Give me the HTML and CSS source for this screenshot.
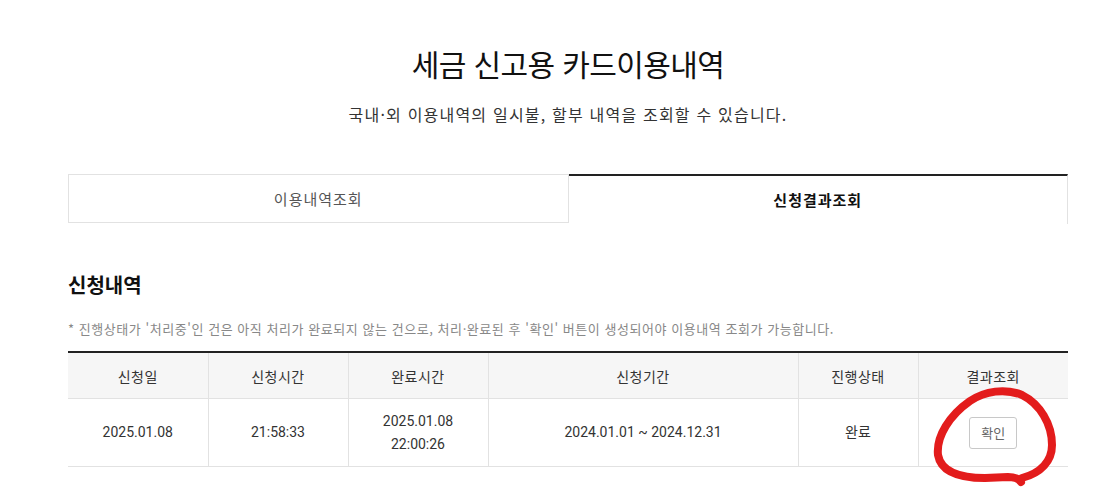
FILE: index.html
```html
<!DOCTYPE html>
<html lang="ko">
<head>
    <meta charset="UTF-8">
    <meta name="viewport" content="width=device-width, initial-scale=1.0">
    <title>세금 신고용 카드이용내역</title>
    <link rel="stylesheet" href="styles.css">
</head>
<body>
    <div class="container">
        <div class="page-head">
            <h1>세금 신고용 카드이용내역</h1>
            <p class="lead">국내·외 이용내역의 일시불, 할부 내역을 조회할 수 있습니다.</p>
        </div>

        <div class="tabs">
            <a class="tab" href="#">이용내역조회</a>
            <a class="tab active" href="#">신청결과조회</a>
        </div>

        <h2 class="section-title">신청내역</h2>
        <p class="note">* 진행상태가 '처리중'인 건은 아직 처리가 완료되지 않는 건으로, 처리·완료된 후 '확인' 버튼이 생성되어야 이용내역 조회가 가능합니다.</p>

        <table class="result-table">
            <colgroup>
                <col class="c-date">
                <col class="c-time">
                <col class="c-done">
                <col class="c-period">
                <col class="c-state">
                <col class="c-result">
            </colgroup>
            <thead>
                <tr>
                    <th>신청일</th>
                    <th>신청시간</th>
                    <th>완료시간</th>
                    <th>신청기간</th>
                    <th>진행상태</th>
                    <th>결과조회</th>
                </tr>
            </thead>
            <tbody>
                <tr>
                    <td>2025.01.08</td>
                    <td>21:58:33</td>
                    <td>2025.01.08<br>22:00:26</td>
                    <td>2024.01.01 ~ 2024.12.31</td>
                    <td>완료</td>
                    <td><button class="btn-check">확인</button></td>
                </tr>
            </tbody>
        </table>
    </div>

    <!-- hand drawn mark over the button -->
    <svg class="mark" width="1096" height="504" viewBox="0 0 1096 504">
        <path d="M1022 478 C1041 473 1052 461 1052 445 C1052 424 1040 404 1022 395 C1005 388 985 391 970 401 C950 415 936 436 938 455 C941 472 960 478 985 478 L1008 477 C1015 477 1019 479 1021 482"
              fill="none" stroke="#e31c1c" stroke-width="8" stroke-linecap="round" stroke-linejoin="round"/>
    </svg>
</body>
</html>
```

FILE: styles.css
```css
body {
    margin: 0;
    background: #fff;
    color: #222;
    font-family: "Noto Sans CJK KR", "Noto Sans", sans-serif;
}

.container {
    width: 1000px;
    margin-left: 68px;
    padding-top: 42px;
}

.page-head {
    text-align: center;
}

h1 {
    margin: 0;
    font-size: 30px;
    font-weight: 400;
    letter-spacing: -0.6px;
    line-height: 42px;
    color: #111;
}

.lead {
    margin: 18px 0 0;
    font-size: 16px;
    letter-spacing: 1.2px;
    line-height: 24px;
    color: #333;
}

.tabs {
    display: flex;
    margin-top: 48px;
}

.tab {
    flex: 1;
    height: 47px;
    line-height: 47px;
    text-align: center;
    font-size: 15px;
    letter-spacing: 1px;
    color: #555;
    text-decoration: none;
    border: 1px solid #e2e2e2;
}

.tab.active {
    border-top: 2px solid #222;
    border-left: none;
    border-bottom: none;
    color: #111;
    font-weight: 700;
    height: 48px;
}

.section-title {
    margin: 47px 0 0;
    font-size: 20px;
    font-weight: 700;
    line-height: 28px;
    color: #111;
}

.note {
    margin: 21px 0 0;
    font-size: 13px;
    letter-spacing: 0.55px;
    line-height: 18px;
    color: #888;
}

.result-table {
    width: 100%;
    margin-top: 13px;
    border-collapse: collapse;
    table-layout: fixed;
    font-family: Roboto, "Noto Sans CJK KR", sans-serif;
    font-size: 14px;
    color: #333;
}

.c-date, .c-time, .c-done { width: 140px; }
.c-period { width: 310px; }
.c-state { width: 120px; }
.c-result { width: 150px; }

.result-table thead tr {
    border-top: 2px solid #222;
}

.result-table th {
    height: 45px;
    background: #f6f6f6;
    font-weight: 400;
    color: #333;
    font-family: "Noto Sans CJK KR", sans-serif;
    letter-spacing: 0.5px;
}

.result-table th,
.result-table td {
    text-align: center;
    border-bottom: 1px solid #e2e2e2;
    border-left: 1px solid #e2e2e2;
    padding: 0;
}

.result-table th:first-child,
.result-table td:first-child {
    border-left: none;
}

.result-table td {
    height: 67px;
    line-height: 23px;
}

.btn-check {
    width: 48px;
    height: 32px;
    padding: 0;
    background: #fff;
    border: 1px solid #c8c8c8;
    border-radius: 3px;
    font-family: "Noto Sans CJK KR", sans-serif;
    font-size: 13px;
    color: #666;
    cursor: pointer;
}

.mark {
    position: absolute;
    top: 0;
    left: 0;
    pointer-events: none;
}
```
